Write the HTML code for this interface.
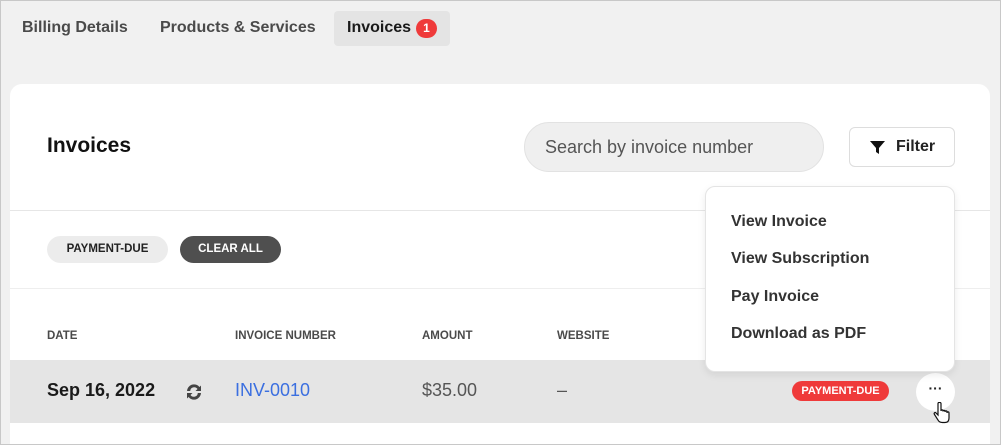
<!DOCTYPE html>
<html><head><style>
*{box-sizing:border-box;margin:0;padding:0}
html,body{width:1001px;height:445px;overflow:hidden}
body{background:#f1f1f1;font-family:"Liberation Sans",Arial,sans-serif;position:relative}
.a{position:absolute}
.tab{top:11px;height:35px;line-height:33px;font-size:16px;font-weight:bold;color:#4a4a4a}
.card{left:10px;top:84px;width:980px;height:361px;background:#fff;border-radius:12px 12px 0 0}
.hd{font-size:11.5px;font-weight:bold;color:#4a4a4a;top:330px}
.mi{left:731px;font-size:16px;font-weight:bold;color:#333}
</style></head><body>
<div class="a tab" style="left:22px">Billing Details</div>
<div class="a tab" style="left:160px">Products &amp; Services</div>
<div class="a tab" style="left:334px;width:116px;background:#e4e4e4;border-radius:4px;padding-left:13px;color:#1a1a1a">Invoices<span class="a" style="left:82px;top:8px;width:21px;height:19px;border-radius:10px;background:#ef3a3a;color:#fff;font-size:12px;line-height:19px;text-align:center">1</span></div>
<div class="a card"></div>
<div class="a" style="left:47px;top:134px;font-size:21px;font-weight:bold;color:#111">Invoices</div>
<div class="a" style="left:524px;top:122px;width:300px;height:50px;border-radius:25px;background:#efefef;border:1px solid #e2e2e2;font-size:18px;color:#555;line-height:48px;padding-left:20px">Search by invoice number</div>
<div class="a" style="left:849px;top:127px;width:106px;height:40px;border-radius:6px;border:1px solid #ddd;background:#fff;font-size:16px;font-weight:bold;color:#222;line-height:38px;padding-left:46px">Filter
<svg class="a" style="left:20px;top:13px" width="15" height="13" viewBox="0 0 15 13"><path d="M0 0H15L9 7V13L6 11V7Z" fill="#111"/></svg></div>
<div class="a" style="left:10px;top:210px;width:980px;height:1px;background:#e6e6e6"></div>
<div class="a" style="left:10px;top:288px;width:980px;height:1px;background:#eee"></div>
<div class="a" style="left:47px;top:236px;width:121px;height:27px;border-radius:14px;background:#ececec;font-size:11.5px;font-weight:bold;color:#222;line-height:27px;text-align:center">PAYMENT-DUE</div>
<div class="a" style="left:180px;top:236px;width:101px;height:27px;border-radius:14px;background:#4f4f4f;font-size:11.5px;font-weight:bold;color:#fff;line-height:27px;text-align:center">CLEAR ALL</div>
<div class="a hd" style="left:47px">DATE</div>
<div class="a hd" style="left:235px">INVOICE NUMBER</div>
<div class="a hd" style="left:422px">AMOUNT</div>
<div class="a hd" style="left:557px">WEBSITE</div>
<div class="a" style="left:10px;top:360px;width:980px;height:63px;background:#e5e5e5"></div>
<div class="a" style="left:47px;top:380px;font-size:18px;font-weight:bold;color:#1a1a1a">Sep 16, 2022</div>
<svg class="a" style="left:184px;top:382px" width="20" height="20" viewBox="0 0 20 20"><path d="M3 9A7 7 0 0 1 15.5 5L17 3.5V9H11.5L13.5 7A4 4 0 0 0 6.2 9Z M17 11A7 7 0 0 1 4.5 15L3 16.5V11H8.5L6.5 13A4 4 0 0 0 13.8 11Z" fill="#444"/></svg>
<div class="a" style="left:235px;top:380px;font-size:18px;color:#3b6fe0">INV-0010</div>
<div class="a" style="left:422px;top:380px;font-size:18px;color:#555">$35.00</div>
<div class="a" style="left:557px;top:380px;font-size:18px;color:#555">–</div>
<div class="a" style="left:792px;top:381px;width:97px;height:20px;border-radius:10px;background:#ef3a3a;color:#fff;font-size:11px;font-weight:bold;line-height:20px;text-align:center">PAYMENT-DUE</div>
<div class="a" style="left:916px;top:373px;width:39px;height:38px;border-radius:50%;background:#fff;font-size:14px;font-weight:bold;text-align:center;line-height:30px;color:#222">···</div>
<svg class="a" style="left:933px;top:402px" width="18" height="22" viewBox="0 0 18 22"><path d="M5 1.5V13L3 11C2 10 0.5 11 1.5 12.5L5 18C6 20 7.5 20.5 9.5 20.5H12C14.5 20.5 16 19 16 16V11C16 9.5 14 9.5 14 11V10C14 8.5 12 8.5 12 10V9.5C12 8 10 8 10 9.5V9C10 7.5 8 7.5 8 9V1.5C8 0 5 0 5 1.5Z" fill="#fff" stroke="#111" stroke-width="1.2"/></svg>
<div class="a" style="left:705px;top:186px;width:250px;height:186px;background:#fff;border:1px solid #e4e4e4;border-radius:10px;box-shadow:0 3px 8px rgba(0,0,0,.08)"></div>
<div class="a mi" style="top:213px">View Invoice</div>
<div class="a mi" style="top:250px">View Subscription</div>
<div class="a mi" style="top:288px">Pay Invoice</div>
<div class="a mi" style="top:325px">Download as PDF</div>
<div class="a" style="left:0;top:0;width:1001px;height:445px;border:1px solid #c8c8c8;pointer-events:none"></div>
</body></html>
